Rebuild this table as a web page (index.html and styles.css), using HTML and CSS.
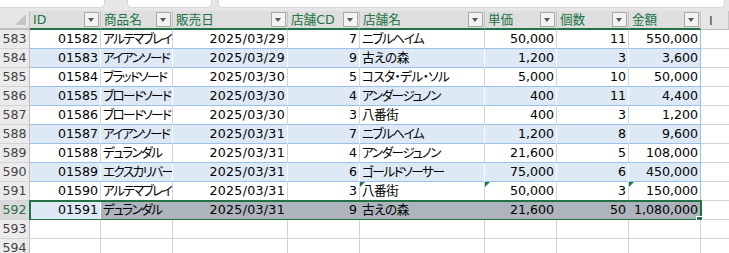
FILE: index.html
```html
<!DOCTYPE html>
<html lang="ja">
<head>
<meta charset="utf-8">
<link rel="stylesheet" href="styles.css">
</head>
<body>
<div class="app">
  <div class="topbar">
    <div class="tbox namebox"></div>
    <div class="tbox fxbox"></div>
    <div class="tbox formula"></div>
  </div>
  <div class="sheet">
    <div class="row hdr">
      <div class="rh corner"><span class="tri"></span></div>
      <div class="ch sel"><span>ID</span><i class="fb"></i></div>
      <div class="ch sel"><span>商品名</span><i class="fb"></i></div>
      <div class="ch sel"><span>販売日</span><i class="fb"></i></div>
      <div class="ch sel"><span>店舗CD</span><i class="fb"></i></div>
      <div class="ch sel"><span>店舗名</span><i class="fb"></i></div>
      <div class="ch sel"><span>単価</span><i class="fb"></i></div>
      <div class="ch sel"><span>個数</span><i class="fb"></i></div>
      <div class="ch sel"><span>金額</span><i class="fb"></i></div>
      <div class="ch plain"><span>I</span></div>
    </div>

    <div class="row">
      <div class="rh">583</div>
      <div class="c r">01582</div><div class="c j">アルテマブレイ</div><div class="c r d">2025/03/29</div><div class="c r">7</div><div class="c k">ニブルヘイム</div><div class="c r">50,000</div><div class="c r">11</div><div class="c r last">550,000</div><div class="c e"></div>
    </div>
    <div class="row band">
      <div class="rh">584</div>
      <div class="c r">01583</div><div class="c j">アイアンソード</div><div class="c r d">2025/03/29</div><div class="c r">9</div><div class="c jk">古えの森</div><div class="c r">1,200</div><div class="c r">3</div><div class="c r last">3,600</div><div class="c e"></div>
    </div>
    <div class="row">
      <div class="rh">585</div>
      <div class="c r">01584</div><div class="c j">ブラッドソード</div><div class="c r d">2025/03/30</div><div class="c r">5</div><div class="c kd">コスタ・デル・ソル</div><div class="c r">5,000</div><div class="c r">10</div><div class="c r last">50,000</div><div class="c e"></div>
    </div>
    <div class="row band">
      <div class="rh">586</div>
      <div class="c r">01585</div><div class="c j">ブロードソード</div><div class="c r d">2025/03/30</div><div class="c r">4</div><div class="c k">アンダージュノン</div><div class="c r">400</div><div class="c r">11</div><div class="c r last">4,400</div><div class="c e"></div>
    </div>
    <div class="row">
      <div class="rh">587</div>
      <div class="c r">01586</div><div class="c j">ブロードソード</div><div class="c r d">2025/03/30</div><div class="c r">3</div><div class="c jk">八番街</div><div class="c r">400</div><div class="c r">3</div><div class="c r last">1,200</div><div class="c e"></div>
    </div>
    <div class="row band">
      <div class="rh">588</div>
      <div class="c r">01587</div><div class="c j">アイアンソード</div><div class="c r d">2025/03/31</div><div class="c r">7</div><div class="c k">ニブルヘイム</div><div class="c r">1,200</div><div class="c r">8</div><div class="c r last">9,600</div><div class="c e"></div>
    </div>
    <div class="row">
      <div class="rh">589</div>
      <div class="c r">01588</div><div class="c j">デュランダル</div><div class="c r d">2025/03/31</div><div class="c r">4</div><div class="c k">アンダージュノン</div><div class="c r">21,600</div><div class="c r">5</div><div class="c r last">108,000</div><div class="c e"></div>
    </div>
    <div class="row band">
      <div class="rh">590</div>
      <div class="c r">01589</div><div class="c j">エクスカリバー</div><div class="c r d">2025/03/31</div><div class="c r">6</div><div class="c k">ゴールドソーサー</div><div class="c r">75,000</div><div class="c r">6</div><div class="c r last">450,000</div><div class="c e"></div>
    </div>
    <div class="row">
      <div class="rh">591</div>
      <div class="c r">01590</div><div class="c j">アルテマブレイ</div><div class="c r d">2025/03/31</div><div class="c r">3</div><div class="c jk err">八番街</div><div class="c r err">50,000</div><div class="c r">3</div><div class="c r last err">150,000</div><div class="c e"></div>
    </div>
    <div class="row band selrow">
      <div class="rh rhsel">592</div>
      <div class="c r active">01591</div><div class="c j s">デュランダル</div><div class="c r d s">2025/03/31</div><div class="c r s">9</div><div class="c jk s">古えの森</div><div class="c r s">21,600</div><div class="c r s">50</div><div class="c r s last">1,080,000</div><div class="c e"></div>
      <div class="selbox"></div>
      <div class="handle"></div>
    </div>
    <div class="row blank">
      <div class="rh">593</div>
      <div class="c"></div><div class="c"></div><div class="c"></div><div class="c"></div><div class="c"></div><div class="c"></div><div class="c"></div><div class="c"></div><div class="c e"></div>
    </div>
    <div class="row blank">
      <div class="rh">594</div>
      <div class="c"></div><div class="c"></div><div class="c"></div><div class="c"></div><div class="c"></div><div class="c"></div><div class="c"></div><div class="c"></div><div class="c e"></div>
    </div>
  </div>
</div>
</body>
</html>
```

FILE: styles.css
```css
* { box-sizing: border-box; margin: 0; padding: 0; }
html, body { width: 729px; height: 253px; overflow: hidden; background: #ffffff; }
body {
  font-family: "DejaVu Sans", "Noto Sans CJK JP", sans-serif;
  font-size: 12.6px;
  font-feature-settings: "palt" 1;
  color: #000;
}
.app { width: 729px; height: 253px; background: #e6e6e6; }

.topbar { height: 11px; display: flex; align-items: flex-start; gap: 0; background: #e6e6e6; }
.tbox { height: 8px; background: #fff; border-radius: 0 0 5px 5px; border: 1px solid #d6d6d6; border-top: none; }
.namebox { width: 105px; border-radius: 0 0 5px 0; border-left: none; }
.fxbox { width: 85px; margin-left: 22px; }
.formula { flex: 1; margin-left: 6px; margin-right: 4px; }

.sheet { background: #fff; }
.row {
  display: grid;
  grid-template-columns: 30px 71px 72px 115px 72px 125px 72px 72px 72px 1fr;
  height: 19px;
  position: relative;
}
.hdr { height: 19px; background: #e6e6e6; }

.rh {
  background: #ebebeb;
  color: #444;
  border-right: 1px solid #bdbdbd;
  border-bottom: 1px solid #d4d4d4;
  text-align: center;
  line-height: 18px;
  white-space: nowrap;
}
.rhsel { background: #d9d9d9; color: #217346; }
.corner { position: relative; border-bottom: 2px solid #bdbdbd; background: #e6e6e6; }
.tri {
  position: absolute; right: 3px; bottom: 3px;
  width: 0; height: 0;
  border-left: 11px solid transparent;
  border-bottom: 11px solid #c4c4c4;
}

.ch {
  display: flex; align-items: center; justify-content: space-between;
  padding: 0 1px 0 3px;
  background: #e1e1e1;
  border-right: 1px solid #c6c6c6;
  color: #444;
  white-space: nowrap;
  overflow: hidden;
}
.ch span { line-height: 17px; }
.ch.sel { color: #217346; background: #dedede; border-bottom: 2px solid #217346; }
.ch.plain { background: #e6e6e6; border-bottom: 1px solid #bdbdbd; justify-content: flex-start; padding-left: 8px; }
.fb {
  width: 15px; height: 15px; flex: none;
  background: #f3f3f3;
  border: 1px solid #a9a9a9;
  position: relative;
}
.fb::after {
  content: ""; position: absolute; left: 3px; top: 5px;
  border-left: 3.5px solid transparent; border-right: 3.5px solid transparent;
  border-top: 4px solid #595959;
}

.c {
  border-right: 1px solid #d4d4d4;
  border-bottom: 1px solid #9bc2e6;
  padding: 0 3px;
  line-height: 18px;
  white-space: nowrap;
  overflow: hidden;
  background: #fff;
  position: relative;
}
.c.j { letter-spacing: -1.6px; padding-left: 2px; }
.c.k { letter-spacing: -1.4px; padding-left: 2px; }
.c.kd { letter-spacing: -0.6px; padding-left: 2px; }
.c.jk { letter-spacing: -0.5px; padding-left: 2px; }
.c.r { text-align: right; padding-right: 2px; }
.c.d { letter-spacing: 0.3px; }
.c.last { border-right-color: #9bc2e6; }
.c.e { border-right: none; border-bottom-color: #d4d4d4; }
.band .c { background: #dde9f5; border-right-color: #ffffff; }
.band .c.last { border-right-color: #9bc2e6; }
.band .c.e { background: #fff; }
.blank .c { border-bottom-color: #d4d4d4; }
.c.s { background: #adb4bc !important; border-right-color: #adb4bc !important; }
.c.active { background: #dde9f5; }
.err::before {
  content: ""; position: absolute; left: 0; top: 0;
  border-top: 5px solid #1e7b3a; border-right: 5px solid transparent;
}

.selbox {
  position: absolute; left: 29px; top: -1px; width: 673px; height: 21px;
  border: 2px solid #217346;
  pointer-events: none;
}
.handle {
  position: absolute; left: 696px; top: 15px; width: 7px; height: 7px;
  background: #217346; border: 1px solid #fff;
}
```
